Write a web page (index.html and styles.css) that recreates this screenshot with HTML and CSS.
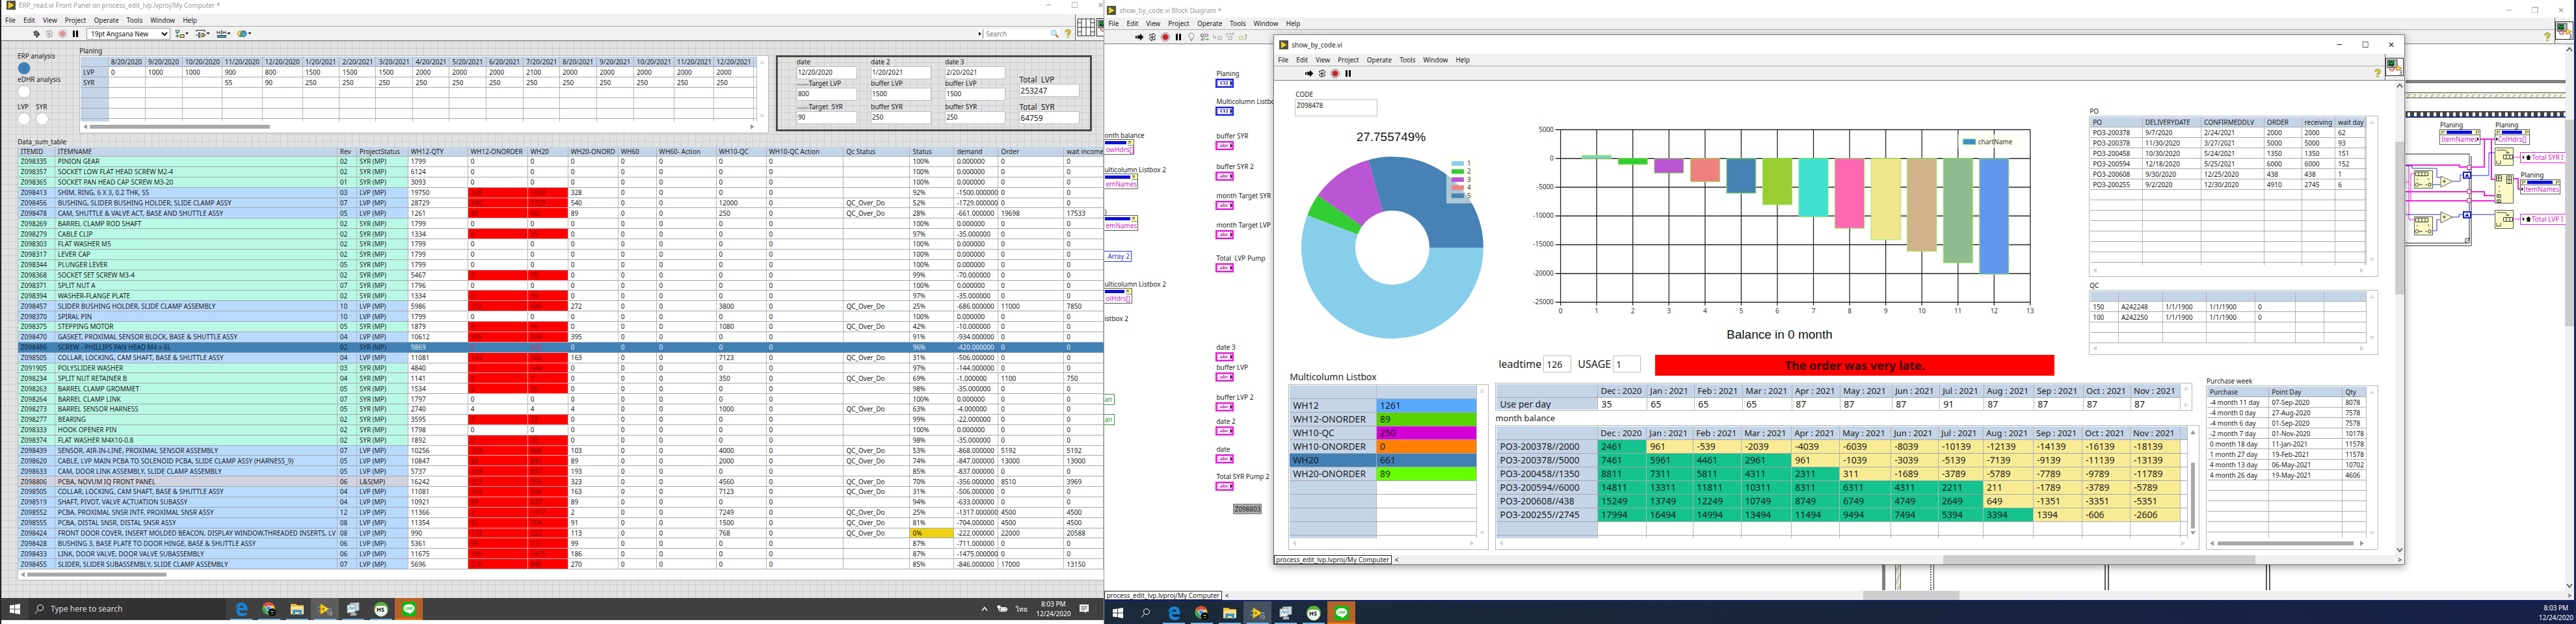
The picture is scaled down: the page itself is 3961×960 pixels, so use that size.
FILE: index.html
```html
<!DOCTYPE html>
<html lang="en">
<head>
<meta charset="utf-8">
<title>ERP_read.vi / show_by_code.vi</title>
<link rel="stylesheet" href="styles.css">
</head>
<body>
<svg class="sprite" aria-hidden="true">
  <symbol id="i-lv" viewBox="0 0 14 14"><rect width="14" height="14" fill="#55524a"/><path d="M3 2l8.500 5L3 12z" fill="#ffe11a"/><path d="M5 5.500v3M3.500 7h3" stroke="#c89b00"/></symbol>
  <symbol id="i-run" viewBox="0 0 14 14"><path d="M1 5h2v4H1zM4 4.500h4V1.500L13.500 7 8 12.500v-3H4z" fill="currentColor"/></symbol>
  <symbol id="i-runbroken" viewBox="0 0 14 14"><path d="M2 4h4V2l5 4-2 1 3 1-5 5V9H3l2-2z" fill="#777" stroke="#222"/></symbol>
  <symbol id="i-cont" viewBox="0 0 14 14"><path d="M3 6V3h5V1l4 4-4 3V6H6M11 8v3H6v2L2 9.500 6 6v3h2" fill="none" stroke="currentColor"/></symbol>
  <symbol id="i-stop" viewBox="0 0 14 14"><circle cx="7" cy="7" r="6.500" fill="#eee" stroke="#777"/><path d="M5 2.500h4L11.500 5v4L9 11.500H5L2.500 9V5z" fill="#c8262e"/></symbol>
  <symbol id="i-pause" viewBox="0 0 14 14"><path d="M3 2h3v10H3zM8 2h3v10H8z" fill="#000"/></symbol>
  <symbol id="i-align" viewBox="0 0 22 14"><path d="M1.500 1.500h5v3h-5zM3.500 5v8M1 10.500h5" fill="none" stroke="#174a4a"/><rect x="8" y="8.500" width="6" height="4" fill="#f5e94a" stroke="#333"/><path d="M16 5h5l-2.500 3z"/></symbol>
  <symbol id="i-dist" viewBox="0 0 22 14"><path d="M1 1.500h13M1 1v3M14 1v3M0 9h3M13 9h3" fill="none" stroke="#222"/><path d="M4.500 5.500h2v7h-2z" fill="#9ed" stroke="#222"/><path d="M9.500 6.500h3v5h-3z" fill="#f5e94a" stroke="#222"/><path d="M16.500 5h5L19 8z"/></symbol>
  <symbol id="i-size" viewBox="0 0 22 14"><path d="M1 3v4M5 3v4M1 5h4M10 3v4M14 3v4M10 5h4M7.500 1v7" fill="none" stroke="#222"/><path d="M1.500 9.500h13v3h-13z" fill="#5ac" stroke="#133"/><path d="M16.500 5h5L19 8z"/></symbol>
  <symbol id="i-order" viewBox="0 0 22 14"><circle cx="5" cy="7" r="4.500" fill="#f3e12d" stroke="#886"/><circle cx="9.500" cy="7" r="4.500" fill="#4aa8d8" stroke="#357"/><path d="M8 2.500l3 2-3 2M6 12l-3-2 3-2" fill="none" stroke="#264"/><path d="M16.500 5h5L19 8z"/></symbol>
  <symbol id="i-bulb" viewBox="0 0 14 14"><path d="M7 1a4 4 0 0 0-2 7.500V10h4V8.500A4 4 0 0 0 7 1zM5 11.500h4M6 13h2" fill="#f4f4ea" stroke="#888"/></symbol>
  <symbol id="i-probe" viewBox="0 0 16 14"><circle cx="4" cy="4" r="2.500" fill="none" stroke="#222"/><path d="M9 2h5v4H9zM4 6v6M1 12h7M6 9h3" fill="none" stroke="#555"/><path d="M9 11h6l-2-2m2 2l-2 2" fill="none" stroke="#2a2"/></symbol>
  <symbol id="i-into" viewBox="0 0 14 14"><path d="M1 3v5h4M3 6l2 2-2 2M8 6h5v5H8z" fill="none" stroke="#999"/></symbol>
  <symbol id="i-over" viewBox="0 0 14 14"><path d="M1 6V2h11M10 0l2 2-2 2M4 6h5v5H4z" fill="none" stroke="#999"/></symbol>
  <symbol id="i-out" viewBox="0 0 14 14"><path d="M1 6h5v5H1z" fill="none" stroke="#bb4"/><path d="M8 10h3V3M9 5l2-2 2 2" fill="none" stroke="#999"/></symbol>
  <symbol id="i-mag" viewBox="0 0 16 16"><path d="M9.500 9.500L14 14.500" stroke="#b5652a" stroke-width="2.500"/><circle cx="6" cy="6" r="4.700" fill="#cdeaf8" stroke="#7fa9c0"/></symbol>
  <symbol id="i-magw" viewBox="0 0 16 16"><path d="M6.500 9.500L2 15" stroke="#fff"/><circle cx="10" cy="6" r="4.500" fill="none" stroke="#fff"/></symbol>
  <symbol id="i-chev" viewBox="0 0 12 12"><path d="M2 8.500l4-5 4 5" fill="none" stroke="currentColor" stroke-width="1.500"/></symbol>
  <symbol id="i-help" viewBox="0 0 10 14"><path d="M2 4.500C2 .8 8 .8 8 4.200 8 6.500 5 6.500 5 9.500M5 11v2" fill="none" stroke="#665c00" stroke-width="3"/><path d="M2 4.500C2 .8 8 .8 8 4.200 8 6.500 5 6.500 5 9.500M5 11v2" fill="none" stroke="#ffee22" stroke-width="1.500"/></symbol>
  <symbol id="i-vi" viewBox="0 0 28 28"><rect x=".5" y=".5" width="27" height="27" fill="#fff" stroke="#222"/><rect x="3" y="3" width="15" height="12" fill="#bbb" stroke="#333"/><rect x="4.500" y="4.500" width="9" height="8" fill="#042"/><path d="M5 9l2-3 2 4 2-4 2 3" fill="none" stroke="#3d5"/><circle cx="10" cy="17" r="3.500" fill="none" stroke="#c33"/><path d="M6 18h8M17 11l8 5-8 4z" fill="#fd3" stroke="#963"/><text x="21" y="26" class="vinum">3</text></symbol>
  <symbol id="i-conn" viewBox="0 0 28 28"><path d="M1 1h26v26H1zM7 1v26M14 1v26M21 1v26M1 7h6M1 14h13M1 21h6M14 14h7M21 7h6M21 14h6M21 21h6" fill="#fff" stroke="#222"/></symbol>
  <symbol id="t-win" viewBox="0 0 16 16"><path d="M0 2.500l7-1v6H0zM8 1.300l8-1.300v7.500H8zM0 8.500h7v6l-7-1zM8 8.500h8V16l-8-1.300z" fill="#fff"/></symbol>
  <symbol id="t-edge" viewBox="0 0 24 24"><path d="M3 11C4 5 8 2 12.500 2 18 2 21.500 6 21.500 11v3H9c.3 3 3 4.500 6 4.500 2 0 4-.5 5.500-1.500v4C18.500 22.300 16 23 13.500 23 8 23 4.500 19.500 4.500 15c0-3 1.500-5.500 4-7C6.500 8.300 4.500 9.500 3 11zm6.200-1h6.500C15.600 7.800 14.500 6.500 12.500 6.500S9.500 8 9.200 10z" fill="#1583dc"/></symbol>
  <symbol id="t-chrome" viewBox="0 0 24 24"><circle cx="11" cy="11" r="9.500" fill="#f4c534"/><path d="M11 11L2.800 6.200A9.500 9.500 0 0 1 19.200 6.300L20 7H11z" fill="#dd4b3e"/><path d="M2.800 6.200A9.500 9.500 0 0 0 10 20.500l4-7-6-.5z" fill="#34a353"/><circle cx="11" cy="11" r="4.300" fill="#fff"/><circle cx="11" cy="11" r="3.300" fill="#4587f0"/><circle cx="16.500" cy="17" r="6" fill="#0a0a0a"/><path d="M14 15.500h5M15 19.500a2 2 0 0 1 3 0" stroke="#ddd" fill="none"/></symbol>
  <symbol id="t-folder" viewBox="0 0 24 24"><path d="M2 4h8l2 2h10v14H2z" fill="#e9b93b"/><path d="M2 8h20v12H2z" fill="#fde08a"/><path d="M5 13h14v8h-4v-4H9v4H5z" fill="#3f97cf"/></symbol>
  <symbol id="t-lv" viewBox="0 0 24 24"><path d="M1 9h5M1 15h5M15 12h7" stroke="#4aa0d0" stroke-width="2"/><path d="M5 4l13 8-13 8z" fill="#ffd91f" stroke="#c79a00"/><path d="M9 9v6M6.500 12h5" stroke="#a66b00" stroke-width="1.500"/><text x="14" y="22" class="lvnum">19</text></symbol>
  <symbol id="t-mon" viewBox="0 0 24 24"><path d="M7 3l14-1v12l-14 2z" fill="#c8d3da" stroke="#8a979f"/><path d="M3 6l12-1v12L3 18z" fill="#e8eef2" stroke="#8a979f"/><path d="M5 13l3-5 2 5 2-4 1 3" fill="none" stroke="#3c8cbb"/><path d="M9 18h8v4H7z" fill="#aab4ba"/></symbol>
  <symbol id="t-hs" viewBox="0 0 24 24"><circle cx="12" cy="12" r="11" fill="#5fb13c"/><path d="M2 13.500a10 10 0 0 0 20 0z" fill="#e9f2e4"/><rect x="3" y="7" width="18" height="10" rx="5" fill="#fff"/><text x="5" y="16" class="hs">HS</text></symbol>
  <symbol id="t-line" viewBox="0 0 24 24"><rect x="1" y="1" width="22" height="22" rx="4" fill="#0fba13"/><path d="M12 4.500c5 0 8.500 3 8.500 6.500 0 4-5 7-8.500 9v-2.500c-5 0-8.500-2.800-8.500-6.500S7 4.500 12 4.500z" fill="#fff"/><text x="6" y="13" class="linetxt">LINE</text></symbol>
  <symbol id="t-note" viewBox="0 0 16 16"><path d="M1 1h14v11h-4l-2 3v-3H1z" fill="#fff"/><path d="M3 4h10M3 6.500h10M3 9h7" stroke="#404040"/></symbol>
  <symbol id="t-plug" viewBox="0 0 16 12"><path d="M4 3.500h10v6H4zM14 5h1.500v3H14" fill="none" stroke="#fff"/><path d="M6 5h7v3H6zM1 1h4v3H1zM2.500 4v4" fill="#fff" stroke="#fff"/></symbol>
</svg>

<section class="desktop erp">
  <div class="win">
    <header class="titlebar">
      <svg class="ico"><use href="#i-lv"/></svg><span>ERP_read.vi Front Panel on process_edit_lvp.lvproj/My Computer *</span>
      <div class="winctl"><button aria-label="Minimize">─</button><button aria-label="Maximize">☐</button><button aria-label="Close">✕</button></div>
    </header>
    <div class="chrome">
      <div class="bars">
        <nav class="menu"></nav>
        <div class="tools">
          <button aria-label="Run"><svg class="ico"><use href="#i-runbroken"/></svg></button>
          <button aria-label="Run continuously" class="dim"><svg class="ico"><use href="#i-cont"/></svg></button>
          <button aria-label="Abort" class="dim"><svg class="ico"><use href="#i-stop"/></svg></button>
          <button aria-label="Pause"><svg class="ico"><use href="#i-pause"/></svg></button>
          <select aria-label="Font"><option>19pt Angsana New</option></select>
          <button aria-label="Align" class="wide"><svg class="ico22"><use href="#i-align"/></svg></button>
          <button aria-label="Distribute" class="wide"><svg class="ico22"><use href="#i-dist"/></svg></button>
          <button aria-label="Resize" class="wide"><svg class="ico22"><use href="#i-size"/></svg></button>
          <button aria-label="Reorder" class="wide"><svg class="ico22"><use href="#i-order"/></svg></button>
          <div class="find"><span class="arrow right dark"></span><input aria-label="Search" placeholder="Search"><svg class="ico"><use href="#i-mag"/></svg></div>
          <button aria-label="Help"><svg class="ico10"><use href="#i-help"/></svg></button>
        </div>
      </div>
      <div class="vi"><svg class="ico28"><use href="#i-conn"/></svg><svg class="ico28"><use href="#i-vi"/></svg></div>
    </div>
    <main class="panel">
      <div class="panel-top">
        <form class="leds">
          <label for="erp">ERP analysis</label><input id="erp" type="checkbox" checked>
          <label for="edhr">eDHR analysis</label><input id="edhr" type="checkbox">
          <div class="ledpair">
            <span><label for="lvp">LVP</label><input id="lvp" type="checkbox"></span>
            <span><label for="syr">SYR</label><input id="syr" type="checkbox"></span>
          </div>
        </form>
        <section class="planing">
          <h2>Planing</h2>
          <div class="listbox">
            <div class="lb-main"><table id="planing" class="grid"></table></div>
            <div class="vbar"><span class="arrow up"></span><span class="arrow down"></span></div>
            <div class="hbar live"><span class="arrow left"></span><i class="thumb"></i><span class="arrow right"></span></div>
          </div>
        </section>
        <form class="cluster">
          <div class="col"><label for="d1">date</label><input id="d1" value="12/20/2020"><label for="t1"><small>month</small>Target LVP</label><input id="t1" value="800"><label for="s1" class="sep"><small>month</small>Target &nbsp;SYR</label><input id="s1" value="90"></div>
          <div class="col"><label for="d2">date 2</label><input id="d2" value="1/20/2021"><label for="t2">buffer LVP</label><input id="t2" value="1500"><label for="s2" class="sep">buffer SYR</label><input id="s2" value="250"></div>
          <div class="col"><label for="d3">date 3</label><input id="d3" value="2/20/2021"><label for="t3">buffer LVP</label><input id="t3" value="1500"><label for="s3" class="sep">buffer SYR</label><input id="s3" value="250"></div>
          <div class="col total"><label for="tl">Total &nbsp;LVP</label><input id="tl" value="253247"><label for="ts" class="sep">Total &nbsp;SYR</label><input id="ts" value="64759"></div>
        </form>
      </div>
      <section class="sumwrap">
        <h2>Data_sum_table</h2>
        <div class="sumbox">
          <table id="sum" class="grid sum"></table>
          <div class="hbar live"><span class="arrow left"></span><i class="thumb"></i></div>
        </div>
      </section>
    </main>
  </div>
  <footer class="taskbar">
    <button class="start" aria-label="Start"><svg class="ico16"><use href="#t-win"/></svg></button>
    <div class="tsearch"><svg class="ico16"><use href="#i-magw"/></svg><input aria-label="Type here to search" placeholder="Type here to search"></div>
    <div class="apps"></div>
    <div class="tray"><svg class="ico12"><use href="#i-chev"/></svg><svg class="ico16"><use href="#t-plug"/></svg><span>ไทย</span><time>8:03 PM<br>12/24/2020</time><svg class="ico16"><use href="#t-note"/></svg></div>
  </footer>
</section>

<section class="desktop code">
  <div class="win">
    <header class="titlebar">
      <svg class="ico"><use href="#i-lv"/></svg><span>show_by_code.vi Block Diagram *</span>
      <div class="winctl"><button aria-label="Minimize">─</button><button aria-label="Restore">❐</button><button aria-label="Close">✕</button></div>
    </header>
    <div class="chrome">
      <div class="bars">
        <nav class="menu"></nav>
        <div class="tools">
          <button aria-label="Run"><svg class="ico"><use href="#i-run"/></svg></button>
          <button aria-label="Run continuously"><svg class="ico"><use href="#i-cont"/></svg></button>
          <button aria-label="Abort"><svg class="ico"><use href="#i-stop"/></svg></button>
          <button aria-label="Pause"><svg class="ico"><use href="#i-pause"/></svg></button>
          <button aria-label="Highlight execution"><svg class="ico"><use href="#i-bulb"/></svg></button>
          <button aria-label="Retain wire values"><svg class="ico"><use href="#i-probe"/></svg></button>
          <button aria-label="Step into"><svg class="ico"><use href="#i-into"/></svg></button>
          <button aria-label="Step over"><svg class="ico"><use href="#i-over"/></svg></button>
          <button aria-label="Step out"><svg class="ico"><use href="#i-out"/></svg></button>
          <button aria-label="Help" class="end"><svg class="ico10"><use href="#i-help"/></svg></button>
        </div>
      </div>
      <div class="vi"><svg class="ico28"><use href="#i-vi"/></svg></div>
    </div>
    <div class="canvas"><div class="winv"><svg class="ico12"><use href="#i-chev"/></svg><i></i><svg class="ico12 dn"><use href="#i-chev"/></svg></div></div>
    <div class="status"><span class="path">process_edit_lvp.lvproj/My Computer</span><b>&lt;</b><i class="track"><i></i></i><b>&gt;</b></div>
  </div>
  <div id="nodes"></div>
  <svg class="wires" viewBox="0 118 246 268" role="img" aria-label="Block diagram">
    <defs><pattern id="stripe" width="9" height="9" patternUnits="userSpaceOnUse"><rect width="9" height="9" fill="#f4f4e2"/><path d="M0 9L5 0h3L3 9z" fill="#c9c9b4"/></pattern>
    <pattern id="film" width="10" height="10" y="171" patternUnits="userSpaceOnUse"><rect width="10" height="10" fill="#444"/><rect x="3" y="2" width="4" height="6" fill="#fff"/></pattern></defs>
    <rect y="123" width="246" height="5" fill="#808080"/>
    <rect x="-2" y="142.500" width="250" height="8" fill="url(#stripe)" stroke="#555"/>
    <rect y="171" width="246" height="9" fill="url(#film)"/><rect y="179" width="246" height="2" fill="#1c2c80"/>
    <path d="M0 237h98M0 374h98M0 378h101M98 237v137M101 240v138M92 374l7-7h-7z" fill="none" stroke="#222"/>
    <g fill="none" stroke="#f020e0">
      <path stroke-width="2" d="M0 254h83v3h38V214M114 214h24M132 214v62h6M0 295h98M100 295h21v6h16M0 309h137M165 275h8v16h4"/>
      <path d="M5 254v84h8M8 309v-42h5M0 280h5M166 242h10M166 337h10"/>
    </g>
    <path d="M0 255h10v4h38v14h6M41 284h13M72 279h12v-10h4M100 270h28v-35h10M0 330h54M72 334h10v-4h6M100 330h38M41 355h7v-17h6" fill="none" stroke="#2530b8"/>
    <g fill="#fbfbc8" stroke="#555"><rect x="13.500" y="262.500" width="28" height="27"/><rect x="13.500" y="333.500" width="28" height="28"/><rect x="137.500" y="227.500" width="28" height="27"/><rect x="137.500" y="268.500" width="28" height="44"/><rect x="137.500" y="323.500" width="28" height="28"/><path d="M54 271l18 8-18 9zM54 326l18 8-18 9z"/></g>
    <g fill="none" stroke="#333"><path d="M15.500 264.500h19v6h-19zM20 264v6M25 264v6M30 264v6M15.500 335.500h19v6h-19zM20 335v6M25 335v6M30 335v6M150.500 238.500h14v6h-14zM155 238v6M160 238v6M150.500 334.500h14v6h-14zM155 334v6M160 334v6M140 231h12q5 0 5 5l-3-2m3 2l3-2M140 327h12q5 0 5 5l-3-2m3 2l3-2M140 247v5h6v-5M140 343v5h6v-5M139.500 270.500h8v8h-8zM143 270v8M139 274h8M155.500 270.500h7v12h-7zM159 270v12M155 276h7M140.500 299.500h6v4h-6zM143 299v4M140.500 307.500h6v4h-6zM143 307v4M20 284h6M30 284h3M35 282h4v4h-4zM20 356h6M30 356h3M35 354h4v4h-4z"/><circle cx="17.500" cy="284" r="2.500"/><circle cx="17.500" cy="356" r="2.500"/><path d="M17 277l2-2M34 274l2 3M17 348l2-2M34 345l2 3M143 288l2-2M143 295l2-2M57 279h5M59.500 276.500v5M57 334h5M59.500 331.500v5"/></g>
    <g fill="#fff" stroke="#1a1ae0" stroke-width="2"><path d="M89 265h11v9H89zM89 326h11v9H89z"/></g><path d="M91 272l3.500-5 3.500 5zM91 333l3.500-5 3.500 5z" fill="#1a1ae0"/>
    <g fill="#ffe3f3" stroke="#a33b6b"><path d="M94.500 254.500h6v6h-6zM94.500 291.500h6v6h-6zM94.500 305.500h6v6h-6z"/></g>
    <g fill="#fff" stroke="#555"><rect x="52.500" y="199.500" width="62" height="23"/><rect x="137.500" y="199.500" width="53" height="23"/><rect x="176.500" y="276.500" width="61" height="22"/><path d="M52 207.500h62M137 207.500h53M176 284.500h61"/></g>
    <g fill="#ffffc4"><path d="M53 200h8v7h-8zM105 200h9v7h-9zM138 200h8v7h-8zM181 200h9v7h-9zM177 277h8v7h-8zM228 277h9v7h-9z"/></g>
    <path d="M56 201v5M59 201v3M109 201v5M112 201v3M141 201v5M144 201v3M185 201v5M188 201v3M180 278v5M183 278v3M232 278v5M235 278v3" stroke="#111"/>
    <path d="M63 201h39v5H63zM148 201h31v5h-31zM187 278h39v5h-39z" fill="#0a10d8"/>
    <g fill="#fff" stroke="#d81fcb"><path d="M248 234.500h-71.500v16H248M248 329.500h-71.500v16H248"/></g>
    <path d="M180 239v6l3-3zM180 334v6l3-3zM110 211v6l3-3zM139 211v6l3-3zM178 288v6l3-3z" fill="#111"/>
    <path d="M185 242l4-4 4 4h-1.500v4h-5v-4zM185 337l4-4 4 4h-1.500v4h-5v-4z" fill="#111"/>
    <g class="dt"><text x="53" y="196">Planing</text><text x="138" y="196">Planing</text><text x="177" y="273">Planing</text></g>
    <g class="dt mg"><text x="55" y="218">ItemNames</text><text x="142" y="218">ColHdrs[]</text><text x="181" y="295">ItemNames</text><text x="194" y="246">Total SYR I</text><text x="194" y="341">Total LVP I</text></g>
  </svg>

  <div class="win float">
    <header class="titlebar">
      <svg class="ico"><use href="#i-lv"/></svg><span>show_by_code.vi</span>
      <div class="winctl"><button aria-label="Minimize">─</button><button aria-label="Maximize">☐</button><button aria-label="Close">✕</button></div>
    </header>
    <div class="chrome">
      <div class="bars">
        <nav class="menu"></nav>
        <div class="tools">
          <button aria-label="Run"><svg class="ico"><use href="#i-run"/></svg></button>
          <button aria-label="Run continuously"><svg class="ico"><use href="#i-cont"/></svg></button>
          <button aria-label="Abort"><svg class="ico"><use href="#i-stop"/></svg></button>
          <button aria-label="Pause"><svg class="ico"><use href="#i-pause"/></svg></button>
          <button aria-label="Help" class="end"><svg class="ico10"><use href="#i-help"/></svg></button>
        </div>
      </div>
      <div class="vi"><svg class="ico28"><use href="#i-vi"/></svg></div>
    </div>
    <div class="fbody">
      <div class="fcontent">
        <div class="frow top">
          <section class="pie">
            <label for="code">CODE</label><textarea id="code" rows="1">Z098478</textarea>
            <svg id="donut" viewBox="1983 195 308 330" role="img" aria-label="Stock share"></svg>
          </section>
          <section class="chart"><svg id="bars" viewBox="2300 184 900 346" role="img" aria-label="Balance by month"></svg></section>
          <section class="lists">
            <h2>PO</h2>
            <div class="listbox">
              <div class="lb-main"><table id="po" class="grid"></table></div>
              <div class="vbar"><span class="arrow up"></span><span class="arrow down"></span></div>
              <div class="hbar"><span class="arrow left"></span><span class="arrow right"></span></div>
            </div>
            <h2 class="qch">QC</h2>
            <div class="listbox">
              <div class="lb-main"><table id="qc" class="grid"></table></div>
              <div class="vbar"><span class="arrow up"></span><span class="arrow down"></span></div>
              <div class="hbar"><span class="arrow left"></span><span class="arrow right"></span></div>
            </div>
          </section>
        </div>
        <div class="frow bottom">
          <section class="wh">
            <h2 class="big">Multicolumn Listbox</h2>
            <div class="listbox">
              <div class="lb-main"><table id="wh" class="grid large"></table></div>
              <div class="vbar"><span class="arrow up"></span><span class="arrow down"></span></div>
              <div class="hbar"><span class="arrow left"></span><span class="arrow right"></span></div>
            </div>
          </section>
          <section class="plan">
            <div class="lead"><label for="lt">leadtime</label><input id="lt" value="126"><label for="us" class="us">USAGE</label><input id="us" value="1"><strong>The order was very late.</strong></div>
            <div class="listbox use">
              <div class="lb-main"><table id="use" class="grid large"></table></div>
              <div class="vbar"><span class="arrow up"></span><span class="arrow down"></span></div>
            </div>
            <h2 class="mb">month balance</h2>
            <div class="listbox balance">
              <div class="lb-main"><table id="balance" class="grid large"></table></div>
              <div class="vbar live"><span class="arrow up"></span><i class="thumb"></i><span class="arrow down"></span></div>
              <div class="hbar"><span class="arrow left"></span><span class="arrow right"></span></div>
            </div>
          </section>
          <section class="week">
            <h2>Purchase week</h2>
            <div class="listbox">
              <div class="lb-main"><table id="week" class="grid"></table></div>
              <div class="vbar"><span class="arrow up"></span><span class="arrow down"></span></div>
              <div class="hbar live"><span class="arrow left"></span><i class="thumb"></i><span class="arrow right"></span></div>
            </div>
          </section>
        </div>
      </div>
      <div class="winv"><svg class="ico12"><use href="#i-chev"/></svg><i></i><svg class="ico12 dn"><use href="#i-chev"/></svg></div>
    </div>
    <div class="status"><span class="path">process_edit_lvp.lvproj/My Computer</span><b>&lt;</b><i class="track"><i></i></i><b>&gt;</b></div>
  </div>

  <footer class="taskbar">
    <button class="start" aria-label="Start"><svg class="ico16"><use href="#t-win"/></svg></button>
    <button class="start" aria-label="Search"><svg class="ico16"><use href="#i-magw"/></svg></button>
    <div class="apps"></div>
    <div class="tray"><time>8:03 PM<br>12/24/2020</time></div>
  </footer>
</section>
<script src="app.js"></script>
</body>
</html>
```
FILE: styles.css
```css
* { box-sizing: border-box; }
body {
  margin: 0; min-height: 100vh; display: flex; overflow-x: hidden;
  font: 10px/14px "Noto Sans", "Open Sans", sans-serif; color: #1c1c1c; background: #fff;
}
button, input, select, textarea { font: inherit; color: inherit; margin: 0; }
button { background: none; border: 0; padding: 0; }
h2 { margin: 0; font-weight: 400; font-size: 10px; line-height: 14px; white-space: nowrap; }
h2.big { font-size: 14px; line-height: 18px; padding: 0 2px 2px; }
svg { display: block; flex: none; }
.sprite { display: none; }
.ico { width: 14px; height: 14px; }
.ico10 { width: 10px; height: 14px; }
.ico12 { width: 12px; height: 12px; }
.ico16 { width: 16px; height: 16px; }
.ico22 { width: 22px; height: 14px; }
.ico28 { width: 28px; height: 28px; }
.vinum { font: 8px "Noto Sans", sans-serif; }
.lvnum { font: 8px "Noto Sans", sans-serif; fill: #ccc; }
.hs { font: bold 9px "Noto Sans", sans-serif; }
.linetxt { font: bold 5px "Noto Sans", sans-serif; fill: #0fba13; }

/* desktops and windows */
.desktop { position: relative; display: flex; flex-direction: column; overflow: hidden; min-width: 0; }
.erp { flex: 1698 1 0; border-left: 2px solid #222; padding-bottom: 6px; }
.code { flex: 2263 1 0; border-left: 1px solid #999; border-right: 3px solid #18265c; background: #fff; }
.win { display: flex; flex-direction: column; flex: 1; min-width: 0; }
.titlebar { display: flex; align-items: center; gap: 5px; height: 27px; padding: 4px 0 0 4px; background: #fff; color: #999; white-space: nowrap; }
.erp .titlebar { height: 22px; padding: 0 0 6px 8px; }
.winctl { margin-left: auto; display: flex; }
.winctl button { width: 40px; font: 12px/14px "DejaVu Sans", sans-serif; }
.erp .winctl { margin-right: -15px; }
.chrome { display: flex; background: #f0f0f0; }
.bars { flex: 1; min-width: 0; }
.menu { display: flex; align-items: center; gap: 12px; height: 19px; padding-left: 6px; border-bottom: 1px solid #aaa; }
.tools { display: flex; align-items: center; height: 22px; padding-left: 47px; border-bottom: 1px solid #777; color: #111; }
.tools button { margin-right: 6px; }
.tools .dim { opacity: .45; }
.tools select { width: 129px; height: 18px; margin: 0 7px 0 4px; padding: 0 2px; border: 1px solid #999; background: #fff; border-radius: 0; }
.tools .wide { margin-right: 10px; }
.tools .end { margin-left: auto; }
.find { margin-left: auto; display: flex; align-items: center; background: #fff; height: 16px; width: 124px; margin-right: 8px; }
.find input { flex: 1; min-width: 0; border: 0; border-left: 1px solid #777; padding: 0 4px; background: #fff; }
.find .arrow { margin-right: 2px; }
.vi { width: 30px; display: flex; align-items: center; border-left: 1px solid #666; border-bottom: 1px solid #777; overflow: hidden; }
.erp .vi { width: 44px; padding-left: 2px; gap: 2px; }
.canvas { flex: 1; display: flex; justify-content: flex-end; }
.winv { width: 14px; padding: 2px 1px; background: #f0f0f0; display: flex; flex-direction: column; color: #444; }
.winv i { flex: none; height: 38%; background: #cdcdcd; margin: 102px -1px 0; }
.winv .dn { margin-top: auto; transform: rotate(180deg); }
.status { display: flex; align-items: center; height: 14px; background: #f0f0f0; }
.status .path { border: 1px solid #222; background: #fff; padding: 0 2px; line-height: 12px; width: 181px; white-space: nowrap; overflow: hidden; }
.status b { width: 14px; text-align: center; color: #444; }
.track { flex: 1; height: 14px; padding-left: 43%; }
.track i { display: block; height: 14px; width: 148px; background: #cdcdcd; }
.float { position: absolute; left: 11.5%; top: 53px; width: 77%; border: 1px solid #777; background: #fff; box-shadow: 0 3px 12px rgba(0, 0, 0, .4); }
.float .titlebar { height: 29px; padding: 0 0 0 8px; color: #222; }
.float .track { padding-left: 48%; }
.float .track i { width: 69%; }
.float .winv i { margin-top: 80px; height: 235px; }

/* front panel */
.panel { flex: 1; background-color: #e2e2e2; background-image: linear-gradient(#cdcdcd 1px, transparent 1px), linear-gradient(90deg, #cdcdcd 1px, transparent 1px); background-size: 11px 11px; padding: 8px 0 0 25px; }
.panel-top { display: grid; grid-template-columns: 84fr 1061fr 487fr; column-gap: 11px; padding-right: 18px; align-items: start; }
.leds { padding-top: 8px; display: flex; flex-direction: column; align-items: flex-start; white-space: nowrap; width: 60px; }
.leds input { appearance: none; width: 20px; height: 20px; border: 1px solid #bbb; border-radius: 50%; background: #fff; margin: 2px 0 0; display: block; }
.leds input:checked { background: #3a7fb8; }
.ledpair { display: flex; gap: 8px; margin-top: 6px; }
.cluster { margin-top: 14px; border: 3px solid #4a4a4a; display: grid; grid-template-columns: repeat(4, 1fr); column-gap: 21px; padding: 1px 16px 8px 29px; height: 117px; }
.col { display: flex; flex-direction: column; justify-content: flex-end; white-space: nowrap; }
.col label { line-height: 13px; height: 13px; }
.col .sep { margin-top: 3px; }
.col input { width: 100%; height: 20px; border: 1px solid #bbb; border-radius: 0; background: #fff; padding: 0 1px 3px; }
.col small { font-size: 6px; color: #666; }
.total label, .total input { font-size: 12px; }
.total .sep { margin-top: 9px; }
.total input { padding-bottom: 0; }
.sumwrap { margin-top: 6px; }
.sumbox { margin-top: 1px; background: #fff; border-bottom: 1px solid #aaa; border-left: 1px solid #bbb; }
.sumbox .thumb { width: 214px; }

/* list boxes */
.listbox { display: grid; grid-template-columns: 1fr 16px; border: 1px solid #b4b4b4; background: #fff; padding: 1px; }
.lb-main { min-width: 0; overflow: hidden; }
.grid { width: 100%; table-layout: fixed; border-collapse: separate; border-spacing: 0; }
.grid th, .grid td { height: 16px; line-height: 14px; padding: 0 0 0 4px; border-right: 1px solid #b0b4b8; border-bottom: 1px solid #a4a8ac; text-align: left; font-weight: 400; white-space: nowrap; overflow: hidden; }
.grid th { background: #c5d5e8; }
.grid .stub th, .grid .stub td { height: 4px; line-height: 3px; border-bottom: 0; }
.week .grid .stub td { height: 9px; }
.grid.large th, .grid.large td { height: 21px; line-height: 18px; font-size: 14px; padding-left: 5px; }
.grid.large thead th { font-size: 13px; padding-left: 4px; }
.grid.large .stub th, .grid.large .stub td { height: 4px; line-height: 3px; }
.sum { height: 650px; }
.sum th, .sum td { height: auto; }
.sum .s { background: #b8f8e4; }
.sum .l { background: #b8daff; }
.sum .m { background: #d2d2e0; }
.sum .red { background: #f00; color: #7c0000; border-color: #e8b0b0; }
.sum .warn { background: #efd113; }
.sum .sel td { background: #4180b5; color: #e8f0f8; border-right-color: #4180b5; }
.sum .sel td.s { color: #0e2438; }
.sum .sel td.red { color: #d03050; }
.hbar { grid-column: 1; height: 16px; display: flex; align-items: center; justify-content: space-between; padding: 0 4px; gap: 4px; color: #d4d4d4; }
.hbar .arrow.right { margin-left: auto; }
.vbar { display: flex; flex-direction: column; align-items: center; justify-content: space-between; padding: 5px 0; color: #dcdcdc; }
.live { color: #999; }
.sumbox .hbar { justify-content: flex-start; }
.thumb { background: #a8a8a8; height: 6px; }
.planing .thumb { width: 277px; }
.arrow { width: 0; height: 0; border: 4px solid transparent; flex: none; }
.arrow.left { border-right: 6px solid currentColor; border-left: 0; }
.arrow.right { border-left: 6px solid currentColor; border-right: 0; }
.arrow.up { border-bottom: 6px solid currentColor; border-top: 0; }
.arrow.down { border-top: 6px solid currentColor; border-bottom: 0; }
.arrow.dark { color: #111; border-width: 3px; border-left-width: 4px; }

/* show_by_code front panel */
.fbody { display: flex; }
.fcontent { flex: 1; min-width: 0; padding: 14px 26px 8px 22px; }
.frow { display: grid; }
.frow.top { grid-template-columns: 308fr 901fr 445fr; column-gap: 11px; }
.frow.bottom { grid-template-columns: 308fr 1082fr 265fr; column-gap: 10px; align-items: end; }
.pie { display: flex; flex-direction: column; }
.pie label { margin-left: 11px; }
.pie textarea { display: block; margin: 1px 0 0 10px; width: 127px; height: 26px; border: 1px solid #bbb; padding: 1px 2px; resize: none; overflow: hidden; }
.pie svg { width: 100%; margin-top: 17px; }
.chart svg { width: 100%; margin-top: 47px; }
.lists { padding-top: 26px; }
.qch { margin-top: 6px; }
.axis { font: 10px "Noto Sans", sans-serif; fill: #333; }
.head { font: 19px "Liberation Sans", sans-serif; fill: #111; }
.lead { display: flex; align-items: center; font-size: 16px; height: 32px; margin-bottom: 11px; padding-left: 5px; }
.lead input { width: 43px; height: 26px; border: 1px solid #bbb; padding: 0 4px; margin: 0 10px 4px 3px; font-size: 14px; }
.lead label { padding-bottom: 4px; }
.lead strong { flex: none; width: 57%; margin-left: 12px; background: #f00; color: #300; font-size: 18px; line-height: 32px; text-align: center; }
h2.mb { font-size: 13px; line-height: 16px; padding: 3px 0; }
#use tbody td, #use tbody th { height: 18px; line-height: 17px; border-bottom: 0; }
.use { width: 99%; }
.use .vbar { padding: 3px 0; }
.balance .vbar { padding-top: 6px; }
.balance .vbar .thumb { width: 6px; height: 101px; margin-top: auto; margin-bottom: 4px; }
.week .thumb { flex: 1; margin-right: 6px; margin-left: 2px; }
.week h2, .lists h2 { padding-left: 1px; }
.b1 { background: #5aaaff; }
.b2 { background: #55d400; }
.b3 { background: #d400d4; }
.b4 { background: #ff7f00; }
.grid th.b5, .b5 { background: #4180b5; }
.b6 { background: #66ff00; }
.ok { background: #14c38e; }
.low { background: #f8eb94; }

/* block diagram */
.wires { position: absolute; right: 13px; top: 118px; width: 246px; height: 268px; overflow: hidden; }
.dt { font: 10px "Noto Sans", sans-serif; fill: #111; }
.mg { fill: #c81fc0; }
.node { position: absolute; white-space: nowrap; line-height: 14px; }
.term { width: 28px; height: 14px; border: 2px solid #d81fd0; background: #ff8df5; font: bold 7px/8px "DejaVu Serif", serif; color: #c010b0; padding: 1px 1px; }
.term::before { content: attr(data-t); display: block; width: 18px; background: #fff; text-align: center; margin-left: 1px; }
.term::after { content: ""; position: absolute; right: 0; top: 2px; border: 3px solid transparent; border-left-color: #111; border-right: 0; }
.term.num { border-color: #1a1ae0; background: #8d95ff; color: #1a1ab0; }
.prop { border: 1px solid #555; border-left: 0; background: #fff; color: #c81fc0; height: 24px; padding: 8px 0 0 2px; line-height: 14px; }
.prop::before { content: ""; position: absolute; left: 1px; right: 11px; top: 2px; height: 5px; background: #0a10d8; }
.prop::after { content: "?!"; position: absolute; right: 0; top: 0; width: 9px; height: 8px; background: #ffffa8; color: #111; font: bold 6px/8px "Noto Sans", sans-serif; border-bottom: 1px solid #777; }
.local { border: 1px solid #2a30c8; border-left: 0; color: #2a30c8; background: #fff; padding-left: 5px; height: 17px; }
.ref { border: 1px solid #2f8f3f; border-left: 0; color: #2f8f3f; height: 17px; line-height: 15px; }
.const { background: #aaa; border: 1px solid #777; padding: 0 1px; }
.bar { background: #808080; }
.bar.stripes { background: repeating-linear-gradient(115deg, #e8e8d8 0 4px, #c9c9b4 4px 7px); border: solid #555; border-width: 0 1px; }
.bar.dots { background: none; border-left: 2px dotted #555; border-right: 1px solid #333; }
.bar.twin { background: #fff; border: solid #555; border-width: 0 2px; }

/* task bars */
.taskbar { display: flex; align-items: stretch; height: 34px; background: #404040; color: #fff; position: relative; }
.code .taskbar { height: 37px; background: linear-gradient(90deg, #1c2b3b, #18243f 60%, #16204a); border-top: 2px solid #15256a; margin-right: -3px; }
.start { width: 42px; display: grid; place-items: center; }
.tsearch { display: flex; align-items: center; gap: 8px; width: 303px; background: #323232; padding-left: 8px; }
.tsearch input { border: 0; background: none; flex: 1; min-width: 0; font-size: 12px; color: #ddd; }
.tsearch input::placeholder { color: #ddd; }
.apps { display: flex; padding-left: 2px; }
.code .apps { padding-left: 1px; }
.apps button { width: 43px; padding: 0 4px; display: flex; flex-direction: column; align-items: center; justify-content: flex-end; gap: 3px; }
.apps svg { width: 24px; height: 24px; }
.apps button::after { content: ""; width: 34px; height: 2px; background: #7ab8ea; }
.apps .active { background: #5c5c5c; }
.code .apps .active { background: #465260; }
.apps .hot { background: #b5622a; }
.apps .hot::after { background: #f07a10; width: 43px; }
.tray { margin-left: auto; display: flex; align-items: center; gap: 13px; padding-right: 22px; text-align: center; }
.tray time { line-height: 15px; }
.code .tray { padding-right: 4px; }
```
FILE: app.js
```js
const byId = id => document.getElementById(id);

document.querySelectorAll('.menu').forEach(m => {
  m.innerHTML = 'File Edit View Project Operate Tools Window Help'.split(' ').map(t => `<button>${t}</button>`).join('');
});
document.querySelectorAll('.apps').forEach(a => {
  a.innerHTML = [['edge', 'Edge'], ['chrome', 'Chrome'], ['folder', 'Explorer'], ['lv', 'LabVIEW', 'active'], ['mon', 'Monitor'], ['hs', 'HS'], ['line', 'LINE', 'hot']]
    .map(([i, n, c]) => `<button aria-label="${n}" class="${c || ''}"><svg><use href="#t-${i}"/></svg></button>`).join('');
});

/* widths are relative column weights; a cell is a string or [text, class] */
function table(id, widths, head, rows, { blank = 0, stub = false, rowHead = false } = {}) {
  const total = widths.reduce((a, b) => a + b);
  const cols = widths.map(w => `<col style="width:${(w / total * 100).toFixed(3)}%">`).join('');
  const cell = (c, i) => {
    const [t, k] = Array.isArray(c) ? c : [c, ''];
    const tag = rowHead && i === 0 ? 'th' : 'td';
    return `<${tag}${k ? ` class="${k}"` : ''}>${t}</${tag}>`;
  };
  const fill = r => widths.map((_, i) => cell(r[i] === undefined ? '' : r[i], i)).join('');
  const body = rows.map(r => `<tr${r.cls ? ` class="${r.cls}"` : ''}>${fill(r)}</tr>`).join('')
    + `<tr>${fill([])}</tr>`.repeat(blank) + (stub ? `<tr class="stub">${fill([])}</tr>` : '');
  byId(id).innerHTML = `<colgroup>${cols}</colgroup><thead><tr>${widths.map((_, i) => `<th>${head[i] || ''}</th>`).join('')}</tr></thead><tbody>${body}</tbody>`;
}

table('planing', [43, 57, 57, 61, 62, 62, 57, 56, 57, 56, 57, 57, 56, 57, 57, 62, 61, 61, 5],
  ['', '8/20/2020', '9/20/2020', '10/20/2020', '11/20/2020', '12/20/2020', '1/20/2021', '2/20/2021', '3/20/2021', '4/20/2021', '5/20/2021', '6/20/2021', '7/20/2021', '8/20/2021', '9/20/2021', '10/20/2021', '11/20/2021', '12/20/2021'],
  ['LVP|0|1000|1000|900|800|1500|1500|1500|2000|2000|2000|2100|2000|2000|2000|2000|2000', 'SYR||||55|90|250|250|250|250|250|250|250|250|250|250|250|250'].map(r => r.split('|')),
  { blank: 3, stub: true, rowHead: true });

const stock = `Z098335|PINION GEAR|02|s|1799|0|0|0|100|0|0
Z098357|SOCKET LOW FLAT HEAD SCREW M2-4|02|s|6124|0|0|0|100|0|0
Z098365|SOCKET PAN HEAD CAP SCREW M3-20|01|s|3093|0|0|0|100|0|0
Z098413|SHIM, RING, 6 X 3, 0.2 THK, SS|03|l|19750|328|1500|0|92|0|0
Z098456|BUSHING, SLIDER BUSHING HOLDER, SLIDE CLAMP ASSY|07|l|28729|540|1729|12000|52|0|0
Z098478|CAM, SHUTTLE &amp; VALVE ACT, BASE AND SHUTTLE ASSY|05|l|1261|89|661|250|28|19698|17533
Z098269|BARREL CLAMP ROD SHAFT|02|s|1799|0|0|0|100|0|0
Z098279|CABLE CLIP|02|s|1334|0|35|0|97|0|0
Z098303|FLAT WASHER M5|02|s|1799|0|0|0|100|0|0
Z098317|LEVER CAP|02|s|1799|0|0|0|100|0|0
Z098344|PLUNGER LEVER|05|s|1799|0|0|0|100|0|0
Z098368|SOCKET SET SCREW M3-4|02|s|5467|0|70|0|99|0|0
Z098371|SPLIT NUT A|07|s|1796|0|0|0|100|0|0
Z098394|WASHER-FLANGE PLATE|02|s|1334|0|35|0|97|0|0
Z098457|SLIDER BUSHING HOLDER, SLIDE CLAMP ASSEMBLY|10|l|5986|272|686|3800|25|11000|7850
Z098370|SPIRAL PIN|10|l|1799|0|0|0|100|0|0
Z098375|STEPPING MOTOR|05|s|1879|0|10|1080|42|0|0
Z098470|GASKET, PROXIMAL SENSOR BLOCK, BASE &amp; SHUTTLE ASSY|04|l|10612|395|934|0|91|0|0
Z098486|SCREW - PHILLIPS PAN HEAD M4 x 6L|02|s|9869|0|420|0|96|0|0
Z098505|COLLAR, LOCKING, CAM SHAFT, BASE &amp; SHUTTLE ASSY|04|l|11081|163|506|7123|31|0|0
Z091905|POLYSLIDER WASHER|03|s|4840|0|144|0|97|0|0
Z098234|SPLIT NUT RETAINER B|04|s|1141|0|1|350|69|1100|750
Z098263|BARREL CLAMP GROMMET|05|s|1534|0|35|0|98|0|0
Z098264|BARREL CLAMP LINK|07|s|1797|0|0|0|100|0|0
Z098273|BARREL SENSOR HARNESS|05|s|2740|4|4|1000|63|0|0
Z098277|BEARING|02|s|3595|0|22|0|99|0|0
Z098333|HOOK OPENER PIN|02|s|1798|0|0|0|100|0|0
Z098374|FLAT WASHER M4X10-0.8|02|s|1892|0|35|0|98|0|0
Z098439|SENSOR, AIR-IN-LINE, PROXIMAL SENSOR ASSEMBLY|07|l|10256|103|868|4000|53|5192|5192
Z098620|CABLE, LVP MAIN PCBA TO SOLENOID PCBA, SLIDE CLAMP ASSY (HARNESS_9)|05|l|10847|89|847|2000|74|13000|13000
Z098633|CAM, DOOR LINK ASSEMBLY, SLIDE CLAMP ASSEMBLY|05|l|5737|193|837|0|85|0|0
Z098806|PCBA, NOVUM IQ FRONT PANEL|06|m|16242|323|356|4560|70|8510|3969
Z098505|COLLAR, LOCKING, CAM SHAFT, BASE &amp; SHUTTLE ASSY|04|l|11081|163|506|7123|31|0|0
Z098519|SHAFT, PIVOT, VALVE ACTUATION SUBASSY|04|l|10921|89|633|0|94|0|0
Z098552|PCBA, PROXIMAL SNSR INTF, PROXIMAL SNSR ASSY|12|l|11366|2|1317|7249|25|4500|4500
Z098555|PCBA, DISTAL SNSR, DISTAL SNSR ASSY|08|l|11354|91|704|1500|81|4500|4500
Z098424|FRONT DOOR COVER, INSERT MOLDED BEACON, DISPLAY WINDOW,THREADED INSERTS, LV|08|l|990|113|222|768|0|22000|20588
Z098428|BUSHING 3, BASE PLATE TO DOOR HINGE, BASE &amp; SHUTTLE ASSY|06|l|5361|99|711|0|87|0|0
Z098433|LINK, DOOR VALVE, DOOR VALVE SUBASSEMBLY|06|l|11675|186|1475|0|87|0|0
Z098455|SLIDER, SLIDER SUBASSEMBLY, SLIDE CLAMP ASSEMBLY|07|l|5696|270|846|0|85|17000|13150`;
const status = { s: 'SYR (MP)', l: 'LVP (MP)', m: 'L&amp;S(MP)' };
table('sum', [57, 434, 30, 79, 92, 92, 62, 77, 59, 92, 77, 119, 102, 68, 68, 101, 61],
  ['ITEMID', 'ITEMNAME', 'Rev', 'ProjectStatus', 'WH12-QTY', 'WH12-ONORDER', 'WH20', 'WH20-ONORD', 'WH60', 'WH60- Action', 'WH10-QC', 'WH10-QC Action', 'Qc Status', 'Status', 'demand', 'Order', 'wait income'],
  stock.split('\n').map(line => {
    const [id, name, rev, k, qty, ord, wh20, qc, pct, order, wait] = line.split('|');
    const red = +wh20 > +ord ? 'red' : '';
    const row = [[id, k], [name, k], [rev, k], [status[k], k], qty, [ord, red], [wh20, red], ord, '0', '0', qc, '0',
      +qc ? 'QC_Over_Do' : '', [pct + '%', pct === '0' ? 'warn' : ''], (+wh20 ? '-' : '') + wh20 + '.000000', order, wait];
    if (id === 'Z098486') row.cls = 'sel';
    return row;
  }));

table('po', [81, 91, 97, 58, 52, 46, 2], ['PO', 'DELIVERYDATE', 'CONFIRMEDDLV', 'ORDER', 'receiving', 'wait day'],
  ['PO3-200378|9/7/2020|2/24/2021|2000|2000|62', 'PO3-200378|11/30/2020|3/27/2021|5000|5000|93', 'PO3-200458|10/30/2020|5/24/2021|1350|1350|151',
    'PO3-200594|12/18/2020|5/25/2021|6000|6000|152', 'PO3-200608|9/30/2020|12/25/2020|438|438|1', 'PO3-200255|9/2/2020|12/30/2020|4910|2745|6'].map(r => r.split('|')),
  { blank: 7, stub: true });
table('qc', [44, 68, 68, 75, 62, 45, 65], [], ['150|A242248|1/1/1900|1/1/1900|0', '100|A242250|1/1/1900|1/1/1900|0'].map(r => r.split('|')), { blank: 2 });
table('week', [96, 114, 37], ['Purchase', 'Point Day', 'Qty'],
  ['-4 month 11 day|07-Sep-2020|8078', '-4 month 0 day|27-Aug-2020|7578', '-4 month 6 day|01-Sep-2020|7578', '-2 month 7 day|01-Nov-2020|10178',
    '0 month 18 day|11-Jan-2021|11578', '1 month 27 day|19-Feb-2021|11578', '4 month 13 day|06-May-2021|10702', '4 month 26 day|19-May-2021|4606'].map(r => r.split('|')),
  { blank: 5, stub: true });
table('wh', [134, 155], [], [['WH12', ['1261', 'b1']], ['WH12-ONORDER', ['89', 'b2']], ['WH10-QC', ['250', 'b3']], ['WH10-ONORDER', ['0', 'b4']], [['WH20', 'b5'], ['661', 'b5']], ['WH20-ONORDER', ['89', 'b6']]],
  { blank: 4, stub: true, rowHead: true });

const months = ['', 'Dec : 2020', 'Jan : 2021', 'Feb : 2021', 'Mar : 2021', 'Apr : 2021', 'May : 2021', 'Jun : 2021', 'Jul : 2021', 'Aug : 2021', 'Sep : 2021', 'Oct : 2021', 'Nov : 2021'];
table('use', [156, 76, 73, 74, 76, 74, 80, 73, 68, 77, 76, 73, 76], months, ['Use per day|35|65|65|65|87|87|87|91|87|87|87|87'.split('|')], { rowHead: true });
table('balance', [156, 75, 72, 74, 77, 74, 79, 73, 69, 77, 75, 74, 77, 11], months,
  [[1, 'PO3-200378//2000|2461|961|-539|-2039|-4039|-6039|-8039|-10139|-12139|-14139|-16139|-18139'],
    [4, 'PO3-200378//5000|7461|5961|4461|2961|961|-1039|-3039|-5139|-7139|-9139|-11139|-13139'],
    [5, 'PO3-200458//1350|8811|7311|5811|4311|2311|311|-1689|-3789|-5789|-7789|-9789|-11789'],
    [8, 'PO3-200594//6000|14811|13311|11811|10311|8311|6311|4311|2211|211|-1789|-3789|-5789'],
    [8, 'PO3-200608//438|15249|13749|12249|10749|8749|6749|4749|2649|649|-1351|-3351|-5351'],
    [9, 'PO3-200255//2745|17994|16494|14994|13494|11494|9494|7494|5394|3394|1394|-606|-2606']]
    .map(([n, r]) => r.split('|').map((t, i) => i ? [t, i <= n ? 'ok' : 'low'] : t)),
  { blank: 1, stub: true, rowHead: true });

/* donut */
(() => {
  const cx = 2143, cy = 380, R = 140, r = 57;
  const parts = [[661, '#4682b4'], [250, '#ba55d3'], [89, '#32cd32'], [1261, '#87ceeb']];
  const sum = parts.reduce((a, p) => a + p[0], 0);
  const pt = (rad, a) => `${(cx + rad * Math.cos(a)).toFixed(2)} ${(cy - rad * Math.sin(a)).toFixed(2)}`;
  let a0 = 0;
  let out = '<text class="head" x="2141" y="216" text-anchor="middle">27.755749%</text>';
  for (const [v, c] of parts) {
    const a1 = a0 + v / sum * 2 * Math.PI, big = a1 - a0 > Math.PI ? 1 : 0;
    out += `<path fill="${c}" d="M${pt(R, a0)}A${R} ${R} 0 ${big} 0 ${pt(R, a1)}L${pt(r, a1)}A${r} ${r} 0 ${big} 1 ${pt(r, a0)}z"/>`;
    a0 = a1;
  }
  out += '<rect x="2226" y="240" width="44" height="72" fill="#ffffee" opacity=".55"/>';
  ['#87ceeb', '#32cd32', '#ba55d3', '#f08080', '#4682b4'].forEach((c, i) => {
    const y = 247 + i * 12.4;
    out += `<rect x="2234" y="${y}" width="19" height="7" fill="${c}"/><text class="axis" x="2258" y="${y + 7}">${i + 1}</text>`;
  });
  byId('donut').innerHTML = out;
})();

/* bar chart */
(() => {
  const x0 = 2399.5, dx = 55.5, y0 = 198.5, dy = 44.2, zero = y0 + dy;
  const vals = [539, -1039, -2539, -4039, -6039, -8039, -10139, -12139, -14139, -16139, -18139, -20139];
  const cols = ['#7fd0c0', '#32cd32', '#ba55d3', '#f08080', '#4682b4', '#9acd32', '#40e0d0', '#ff69b4', '#f0e68c', '#d2b48c', '#8fbc8f', '#6495ed'];
  let out = '<g stroke="#222" stroke-width="1.3">';
  for (let i = 0; i <= 13; i++) out += `<path d="M${x0 + i * dx} ${y0}V${y0 + 6 * dy + 5}"/>`;
  for (let i = 0; i <= 6; i++) out += `<path d="M${x0 - 8} ${y0 + i * dy}H${x0 + 13 * dx}"/>`;
  out += '</g>';
  for (let i = 0; i <= 13; i++) out += `<text class="axis" x="${x0 + i * dx}" y="481" text-anchor="middle">${i}</text>`;
  for (let i = 0; i <= 6; i++) out += `<text class="axis" x="2389" y="${y0 + i * dy + 3}" text-anchor="end">${5000 - i * 5000}</text>`;
  vals.forEach((v, i) => {
    const h = Math.abs(v) / 5000 * dy;
    out += `<rect x="${x0 + (i + 1) * dx - 22.5}" y="${v > 0 ? zero - h : zero}" width="45" height="${h}" fill="${cols[i]}" stroke="#90ee50"/>`;
  });
  out += '<rect x="3010" y="206" width="94" height="21" fill="#ffffee" opacity=".7"/><rect x="3018" y="213" width="19" height="8" fill="#3b8bd0" stroke="#60d080"/><text class="axis" x="3041" y="221">chartName</text>';
  out += '<text class="head" x="2736" y="520" text-anchor="middle">Balance in 0 month</text>';
  byId('bars').innerHTML = out;
})();

/* block diagram items: x, y, kind, text, width, height */
const items = [];
[['Planing', 106, 'num'], ['Multicolumn Listbo', 149, 'num'], ['buffer SYR', 202], ['buffer SYR 2', 249], ['month Target SYR', 294], ['month Target LVP', 339], ['Total &nbsp;LVP Pump', 390],
  ['date 3', 527], ['buffer LVP', 558], ['buffer LVP 2', 604], ['date 2', 641], ['date', 684], ['Total SYR Pump 2', 726]]
  .forEach(([t, y, k]) => items.push([172, y, '', t], [171, y + 15, 'term ' + (k || ''), '', 0, 0, k ? 'I32' : 'abc']));
items.push([0, 201, '', 'onth balance'], [0, 214, 'prop', 'owHdrs[]', 46], [0, 254, '', 'ulticolumn Listbox 2'], [0, 267, 'prop', 'emNames', 52],
  [0, 319, '', ')'], [0, 331, 'prop', 'emNames', 52], [0, 386, 'local', 'Array 2', 42], [0, 430, '', 'ulticolumn Listbox 2'], [0, 443, 'prop', 'olHdrs[]', 43],
  [0, 483, '', 'istbox 2'], [0, 606, 'ref', 'an', 16], [0, 637, 'ref', 'an', 16], [198, 775, 'const', 'Z098803', 44],
  [1196, 868, 'bar', '', 5, 40], [1216, 868, 'bar stripes', '', 9, 40], [1270, 868, 'bar dots', '', 6, 40], [1538, 868, 'bar twin', '', 7, 40], [1786, 868, 'bar twin', '', 7, 40]);
byId('nodes').innerHTML = items.map(([x, y, k, t, w, h, d]) =>
  `<span class="node ${k}"${d ? ` data-t="${d}"` : ''} style="left:${x}px;top:${y}px${w ? `;width:${w}px` : ''}${h ? `;height:${h}px` : ''}">${t}</span>`).join('');
```
